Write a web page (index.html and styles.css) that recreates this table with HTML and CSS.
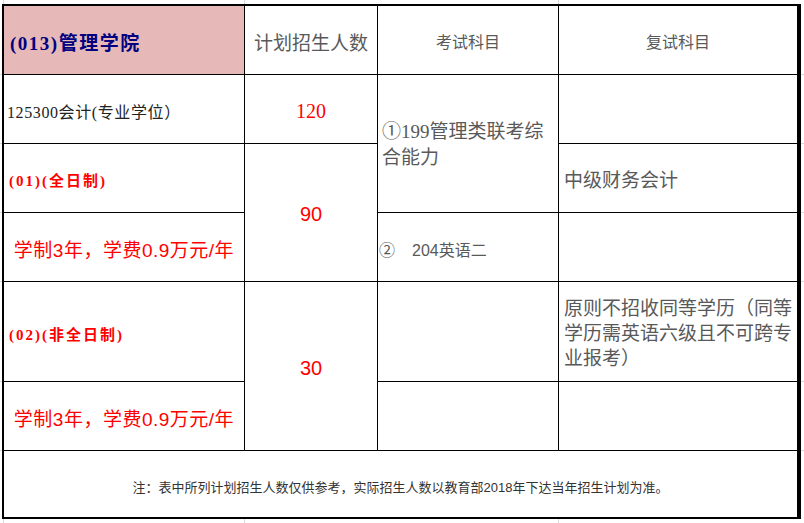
FILE: index.html
```html
<!DOCTYPE html>
<html lang="zh-CN">
<head>
<meta charset="utf-8">
<title>管理学院招生计划</title>
<link rel="stylesheet" href="styles.css">
</head>
<body>
<div class="sheet">
  <div class="cell head-college">(013)管理学院</div>
  <div class="cell head-plan">计划招生人数</div>
  <div class="cell head-sub">考试科目</div>
  <div class="cell head-sub">复试科目</div>

  <div class="cell major">125300会计(专业学位）</div>
  <div class="cell num serif">120</div>
  <div class="cell exam exam-main">①199管理类联考综<br>合能力</div>
  <div class="cell"></div>

  <div class="cell track">(01)(全日制)</div>
  <div class="cell num span-2">90</div>
  <div class="cell retest">中级财务会计</div>

  <div class="cell fee">学制3年，学费0.9万元/年</div>
  <div class="cell exam exam-small"><span class="mark">②</span>204英语二</div>
  <div class="cell"></div>

  <div class="cell track tall">(02)(非全日制)</div>
  <div class="cell num span-2">30</div>
  <div class="cell"></div>
  <div class="cell retest">原则不招收同等学历（同等<br>学历需英语六级且不可跨专<br>业报考）</div>

  <div class="cell fee">学制3年，学费0.9万元/年</div>
  <div class="cell"></div>
  <div class="cell"></div>

  <div class="cell note">注：表中所列计划招生人数仅供参考，实际招生人数以教育部2018年下达当年招生计划为准。</div>
</div>
</body>
</html>
```
FILE: styles.css
```css
html, body {
  margin: 0;
  padding: 0;
}

body {
  width: 804px;
  height: 523px;
  overflow: hidden;
  background-color: #ffffff;
  background-image:
    linear-gradient(to right, transparent 3px, #dadada 3px, #dadada 4px, transparent 4px),
    linear-gradient(to right, transparent 244px, #dadada 244px, #dadada 245px, transparent 245px),
    linear-gradient(to right, transparent 558px, #dadada 558px, #dadada 559px, transparent 559px),
    linear-gradient(to bottom, transparent 74px, #dadada 74px, #dadada 75px, transparent 75px),
    linear-gradient(to bottom, transparent 143px, #dadada 143px, #dadada 144px, transparent 144px),
    linear-gradient(to bottom, transparent 212px, #dadada 212px, #dadada 213px, transparent 213px),
    linear-gradient(to bottom, transparent 281px, #dadada 281px, #dadada 282px, transparent 282px),
    linear-gradient(to bottom, transparent 381px, #dadada 381px, #dadada 382px, transparent 382px),
    linear-gradient(to bottom, transparent 450px, #dadada 450px, #dadada 451px, transparent 451px);
  font-family: "Liberation Sans", "Noto Sans CJK SC", sans-serif;
  padding: 4px 0 0 2px;
  box-sizing: border-box;
}

.sheet {
  display: grid;
  grid-template-columns: 240px 132px 180px 238px;
  grid-template-rows: 68px 68px 68px 68px 99px 68px 66px;
  gap: 1px;
  width: 795px;
  border: 2px solid #000;
  background: #000;
}

.cell {
  background: #fff;
  display: flex;
  align-items: center;
  min-width: 0;
  box-sizing: border-box;
  white-space: nowrap;
}

.head-college {
  background: #e6b8b7;
  color: #000080;
  font-weight: bold;
  font-size: 19px;
  letter-spacing: 1.5px;
  padding: 2px 0 0 6px;
  font-family: "Liberation Serif", "Noto Sans CJK SC", serif;
}

.head-plan {
  justify-content: center;
  color: #595959;
  font-size: 19px;
  padding-top: 2px;
}

.head-sub {
  justify-content: center;
  color: #595959;
  font-size: 16px;
  padding-top: 2px;
}

.major {
  color: #222222;
  font-size: 16px;
  letter-spacing: 0.6px;
  padding: 3px 0 0 3px;
  font-family: "Liberation Serif", "Noto Sans CJK SC", serif;
}

.num {
  justify-content: center;
  color: #ff0000;
  font-size: 20px;
  padding-top: 4px;
}

.serif {
  font-family: "Liberation Serif", "Noto Sans CJK SC", serif;
}

.span-2 {
  grid-row: span 2;
}

.exam {
  color: #595959;
  padding-left: 4px;
}

.exam-main {
  grid-row: span 2;
  font-size: 19px;
  line-height: 26px;
  font-family: "Liberation Serif", "Noto Sans CJK SC", serif;
  padding-top: 2px;
}

.exam-small {
  font-size: 16px;
  padding: 4px 0 0 1px;
}

.mark {
  font-size: 16px;
  margin-right: 17px;
}

.retest {
  color: #595959;
  font-size: 19px;
  line-height: 25px;
  padding: 4px 0 0 5px;
}

.track {
  color: #ff0000;
  font-weight: bold;
  font-size: 15px;
  letter-spacing: 2px;
  padding: 2px 0 0 5px;
  font-family: "Liberation Serif", "Noto Sans CJK SC", serif;
}

.tall {
  padding-top: 4px;
}

.fee {
  justify-content: center;
  color: #ff0000;
  font-size: 19px;
  letter-spacing: 0.5px;
  padding-top: 2px;
}

.note {
  grid-column: 1 / -1;
  justify-content: center;
  color: #333333;
  font-size: 13px;
  padding-top: 4px;
}
```
